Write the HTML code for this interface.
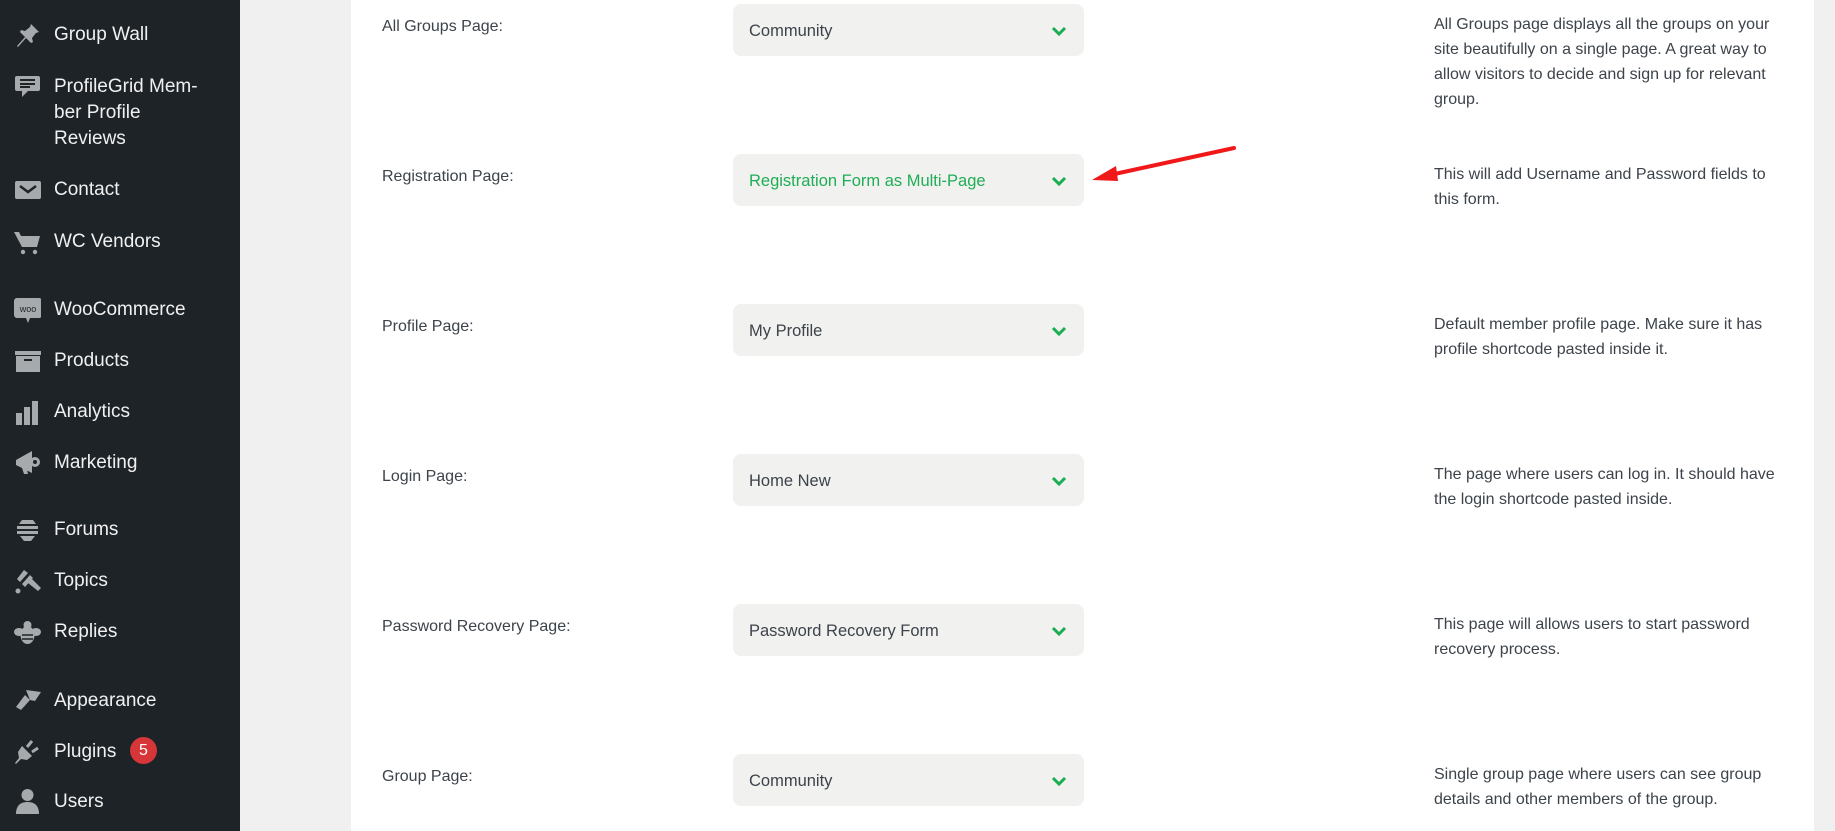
<!DOCTYPE html>
<html><head><meta charset="utf-8"><style>
*{margin:0;padding:0;box-sizing:border-box}
body{width:1835px;height:831px;overflow:hidden;background:#f0f0f1;font-family:"Liberation Sans",sans-serif;position:relative}
#side{position:absolute;left:0;top:0;width:240px;height:831px;background:#1d2327}
.it{position:absolute;left:54px;color:#f0f0f1;font-size:19px;line-height:26px;white-space:nowrap;margin-top:2px}
.ic{position:absolute;left:14px;width:27px;height:27px;margin-top:2px}
#panel{position:absolute;left:351px;top:0;width:1463px;height:831px;background:#fff}
.lab{position:absolute;left:382px;font-size:16px;color:#3c434a;margin-top:2px}
.sel{position:absolute;left:733px;width:351px;height:52px;background:#f1f1ef;border-radius:8px;font-size:16.5px;color:#3c434a;padding-left:16px;line-height:54px}
.sel svg{position:absolute;left:318px;top:22px}
.desc{position:absolute;left:1434px;width:350px;font-size:16px;line-height:25px;color:#3c434a;margin-top:4px}
</style></head><body>
<div id="side">
<svg class="ic" style="top:20px" viewBox="0 0 27 27"><path d="M17 2l8 8-3 1-4 5 1 4-2 1-5-5-8 9-1-1 8-9-5-5 1-2 4 1 5-4z" fill="#a7aaad"/></svg>
<div class="it" style="top:20px">Group Wall</div>
<svg class="ic" style="top:72px" viewBox="0 0 27 27"><path d="M3 2h21a2 2 0 0 1 2 2v11a2 2 0 0 1-2 2H14l-6 6v-6H3a2 2 0 0 1-2-2V4a2 2 0 0 1 2-2z" fill="#a7aaad"/><path d="M6 6h15M6 10h15M6 13h10" stroke="#1d2327" stroke-width="2"/></svg>
<div class="it" style="top:72px">ProfileGrid Mem-<br>ber Profile<br>Reviews</div>
<svg class="ic" style="top:175px" viewBox="0 0 27 27"><rect x="1" y="4" width="26" height="18" rx="2" fill="#a7aaad"/><path d="M6 9l8 6 8-6" stroke="#1d2327" stroke-width="2.5" fill="none"/></svg>
<div class="it" style="top:175px">Contact</div>
<svg class="ic" style="top:227px" viewBox="0 0 27 27"><path d="M0 3h5l2 4h19l-3 11H8z" fill="#a7aaad"/><circle cx="9" cy="23" r="2.2" fill="#a7aaad"/><circle cx="21" cy="23" r="2.2" fill="#a7aaad"/></svg>
<div class="it" style="top:227px">WC Vendors</div>
<svg class="ic" style="top:294px" viewBox="0 0 27 27"><rect x="0" y="2" width="28" height="20" rx="3" fill="#a7aaad"/><path d="M12 22l2 5 2-5z" fill="#a7aaad"/><text x="14" y="16" font-size="9" text-anchor="middle" fill="#1d2327" font-family="Liberation Sans">woo</text></svg>
<div class="it" style="top:295px">WooCommerce</div>
<svg class="ic" style="top:346px" viewBox="0 0 27 27"><rect x="1" y="3" width="26" height="4" fill="#a7aaad"/><rect x="2" y="8" width="24" height="16" fill="#a7aaad"/><rect x="10" y="11" width="8" height="2" fill="#1d2327"/></svg>
<div class="it" style="top:346px">Products</div>
<svg class="ic" style="top:397px" viewBox="0 0 27 27"><rect x="2" y="14" width="6" height="12" fill="#a7aaad"/><rect x="10" y="8" width="6" height="18" fill="#a7aaad"/><rect x="18" y="2" width="6" height="24" fill="#a7aaad"/></svg>
<div class="it" style="top:397px">Analytics</div>
<svg class="ic" style="top:447px" viewBox="0 0 27 27"><path d="M2 11l16-9v22L2 16z" fill="#a7aaad"/><circle cx="21" cy="13" r="5" fill="#a7aaad"/><circle cx="21" cy="13" r="2" fill="#1d2327"/><path d="M7 16l3 9h4l-2-8z" fill="#a7aaad"/></svg>
<div class="it" style="top:448px">Marketing</div>
<svg class="ic" style="top:515px" viewBox="0 0 27 27"><path d="M8 3h11l3 4H5zM3 9h21v3H3zM3 14h21v3H3zM6 19h15l-4 5h-7z" fill="#a7aaad"/></svg>
<div class="it" style="top:515px">Forums</div>
<svg class="ic" style="top:566px" viewBox="0 0 27 27"><path d="M10 2l4 3-8 9-3-3zM16 7l3 3-8 9-3-3zM14 15l4-4 9 9-3 3z" fill="#a7aaad"/><circle cx="4" cy="23" r="2.5" fill="#a7aaad"/></svg>
<div class="it" style="top:566px">Topics</div>
<svg class="ic" style="top:617px" viewBox="0 0 27 27"><ellipse cx="13.5" cy="16" rx="7" ry="9" fill="#a7aaad"/><ellipse cx="5" cy="13" rx="5" ry="4" fill="#a7aaad"/><ellipse cx="22" cy="13" rx="5" ry="4" fill="#a7aaad"/><circle cx="13.5" cy="6" r="4" fill="#a7aaad"/><path d="M8 16h11M8 20h11" stroke="#1d2327" stroke-width="1.5"/></svg>
<div class="it" style="top:617px">Replies</div>
<svg class="ic" style="top:685px" viewBox="0 0 27 27"><path d="M12 3l15 2-6 9-5-1z" fill="#a7aaad"/><path d="M11 8l5 5-9 10-5-3z" fill="#a7aaad"/></svg>
<div class="it" style="top:686px">Appearance</div>
<svg class="ic" style="top:736px" viewBox="0 0 27 27"><path d="M8 8l10 10-5 4-6-1-5 5-1-1 4-5-1-6z" fill="#a7aaad"/><path d="M13 9l5-6M18 14l6-4" stroke="#a7aaad" stroke-width="3"/></svg>
<div class="it" style="top:737px">Plugins</div>
<div style="position:absolute;left:130px;top:737px;width:27px;height:27px;border-radius:50%;background:#d63638;color:#fff;font-size:16px;text-align:center;line-height:27px">5</div>
<svg class="ic" style="top:786px" viewBox="0 0 27 27"><circle cx="13.5" cy="7" r="6" fill="#a7aaad"/><path d="M2 26c0-8 4-12 11.5-12S25 18 25 26z" fill="#a7aaad"/></svg>
<div class="it" style="top:787px">Users</div>
</div>
<div id="panel"></div>

<div class="lab" style="top:16px">All Groups Page:</div>
<div class="sel" style="top:4px">Community<svg width="16" height="10" viewBox="0 0 16 10"><path d="M2 2l6 6 6-6" stroke="#1bad52" stroke-width="3" fill="none"/></svg></div>
<div class="desc" style="top:8px">All Groups page displays all the groups on your site beautifully on a single page. A great way to allow visitors to decide and sign up for relevant group.</div>

<div class="lab" style="top:166px">Registration Page:</div>
<div class="sel" style="top:154px;color:#1fae56">Registration Form as Multi-Page<svg width="16" height="10" viewBox="0 0 16 10"><path d="M2 2l6 6 6-6" stroke="#1bad52" stroke-width="3" fill="none"/></svg></div>
<div class="desc" style="top:158px">This will add Username and Password fields to this form.</div>

<div class="lab" style="top:316px">Profile Page:</div>
<div class="sel" style="top:304px">My Profile<svg width="16" height="10" viewBox="0 0 16 10"><path d="M2 2l6 6 6-6" stroke="#1bad52" stroke-width="3" fill="none"/></svg></div>
<div class="desc" style="top:308px">Default member profile page. Make sure it has profile shortcode pasted inside it.</div>

<div class="lab" style="top:466px">Login Page:</div>
<div class="sel" style="top:454px">Home New<svg width="16" height="10" viewBox="0 0 16 10"><path d="M2 2l6 6 6-6" stroke="#1bad52" stroke-width="3" fill="none"/></svg></div>
<div class="desc" style="top:458px">The page where users can log in. It should have the login shortcode pasted inside.</div>

<div class="lab" style="top:616px">Password Recovery Page:</div>
<div class="sel" style="top:604px">Password Recovery Form<svg width="16" height="10" viewBox="0 0 16 10"><path d="M2 2l6 6 6-6" stroke="#1bad52" stroke-width="3" fill="none"/></svg></div>
<div class="desc" style="top:608px">This page will allows users to start password recovery process.</div>

<div class="lab" style="top:766px">Group Page:</div>
<div class="sel" style="top:754px">Community<svg width="16" height="10" viewBox="0 0 16 10"><path d="M2 2l6 6 6-6" stroke="#1bad52" stroke-width="3" fill="none"/></svg></div>
<div class="desc" style="top:758px">Single group page where users can see group details and other members of the group.</div>

<svg style="position:absolute;left:0;top:0" width="1835" height="831"><path d="M1234 148L1110 175" stroke="#f01818" stroke-width="4" stroke-linecap="round"/><path d="M1092 180l24-14 2 15z" fill="#f01818"/></svg>
</body></html>
